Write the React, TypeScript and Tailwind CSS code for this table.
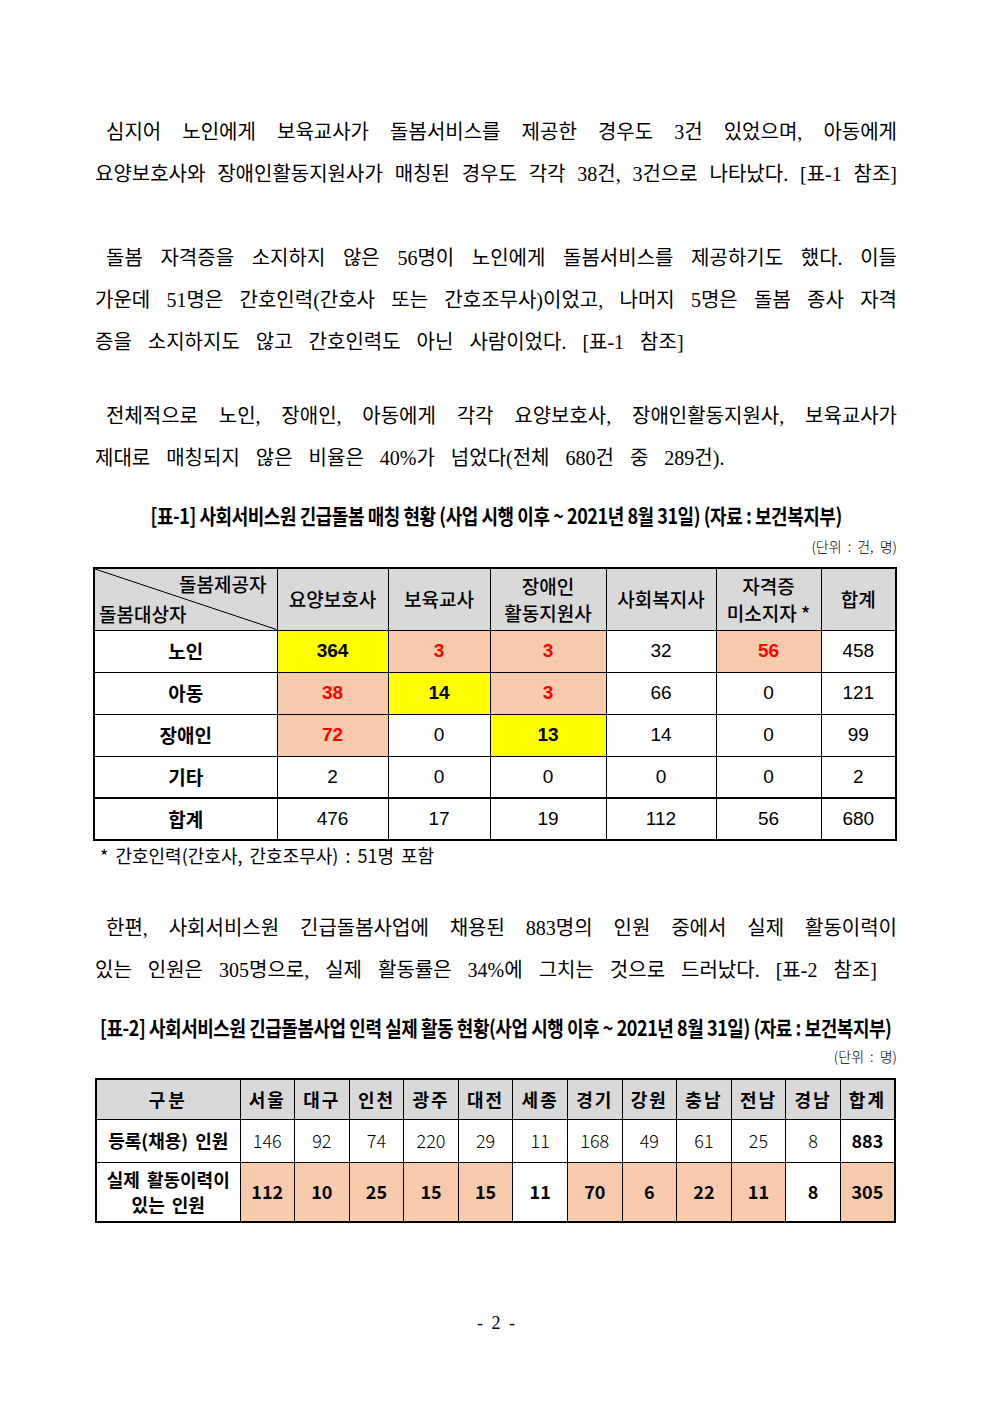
import React from "react";

const serif = "[font-family:'Liberation_Serif','Noto_Sans_CJK_KR',serif]";
const gothic = "[font-family:'Noto_Sans_CJK_KR',sans-serif]";
const narrow = "[font-family:'Liberation_Sans_Narrow','Liberation_Sans','Noto_Sans_CJK_KR',sans-serif]";

function Line({
  children,
  full = true,
  indent = false,
}: {
  children: React.ReactNode;
  full?: boolean;
  indent?: boolean;
}) {
  return (
    <div
      className={`h-[42px] leading-[42px] ${
        full ? "text-justify [text-align-last:justify]" : "text-left [word-spacing:11px]"
      } ${indent ? "pl-[11px]" : ""}`}
    >
      {children}
    </div>
  );
}

function Title({ children }: { children: React.ReactNode }) {
  return (
    <div className="flex h-[30px] items-center justify-center">
      <span
        className={`inline-block shrink-0 whitespace-nowrap text-[21px] font-bold tracking-[-0.5px] scale-x-[0.855] ${gothic}`}
      >
        {children}
      </span>
    </div>
  );
}

function Unit({ children }: { children: React.ReactNode }) {
  return (
    <div className="flex h-[20px] items-center justify-end">
      <span
        className={`inline-block origin-right whitespace-nowrap text-[14px] font-light [word-spacing:3px] ${gothic}`}
      >
        {children}
      </span>
    </div>
  );
}

type Kind = "y" | "p" | "";
const rows1: { label: string; cells: [string, Kind][]; total?: boolean }[] = [
  { label: "노인", cells: [["364", "y"], ["3", "p"], ["3", "p"], ["32", ""], ["56", "p"], ["458", ""]] },
  { label: "아동", cells: [["38", "p"], ["14", "y"], ["3", "p"], ["66", ""], ["0", ""], ["121", ""]] },
  { label: "장애인", cells: [["72", "p"], ["0", ""], ["13", "y"], ["14", ""], ["0", ""], ["99", ""]] },
  { label: "기타", cells: [["2", ""], ["0", ""], ["0", ""], ["0", ""], ["0", ""], ["2", ""]] },
  { label: "합계", cells: [["476", ""], ["17", ""], ["19", ""], ["112", ""], ["56", ""], ["680", ""]], total: true },
];

function Table1() {
  const head = "border border-black bg-[#d9d9d9] text-center align-middle font-medium";
  return (
    <table className={`w-[802px] table-fixed border-collapse border-2 border-black text-[19px] ${gothic}`}>
      <colgroup>
        <col className="w-[183px]" />
        <col className="w-[111px]" />
        <col className="w-[102px]" />
        <col className="w-[116px]" />
        <col className="w-[110px]" />
        <col className="w-[105px]" />
        <col className="w-[75px]" />
      </colgroup>
      <thead>
        <tr className="h-[62px]">
          <td className="relative border border-black bg-[#d9d9d9] p-0 font-medium">
            <svg
              className="absolute inset-0 h-full w-full"
              viewBox="0 0 100 100"
              preserveAspectRatio="none"
            >
              <line x1="0" y1="0" x2="100" y2="100" stroke="black" strokeWidth="1" vectorEffect="non-scaling-stroke" />
            </svg>
            <div className="relative flex h-[60px] flex-col justify-between px-[4px] pt-[1px] pb-[2px] leading-[27px]">
              <div className="pr-[6px] text-right">돌봄제공자</div>
              <div className="text-left">돌봄대상자</div>
            </div>
          </td>
          <td className={head}>요양보호사</td>
          <td className={head}>보육교사</td>
          <td className={`${head} leading-[27px]`}>
            장애인
            <br />
            활동지원사
          </td>
          <td className={head}>사회복지사</td>
          <td className={`${head} leading-[27px]`}>
            자격증
            <br />
            미소지자 *
          </td>
          <td className={head}>합계</td>
        </tr>
      </thead>
      <tbody>
        {rows1.map((r) => (
          <tr key={r.label} className="h-[42px]">
            <td
              className={`border border-black text-center font-bold ${r.total ? "border-t-2" : ""}`}
            >
              {r.label}
            </td>
            {r.cells.map(([v, k], i) => (
              <td
                key={i}
                className={`border border-black text-center text-[19px] ${narrow} ${
                  r.total ? "border-t-2" : ""
                } ${k === "y" ? "bg-[#ffff00] font-bold text-black" : ""} ${
                  k === "p" ? "bg-[#f8cbad] font-bold text-[#ff0000]" : ""
                }`}
              >
                {v}
              </td>
            ))}
          </tr>
        ))}
      </tbody>
    </table>
  );
}

const regions = ["서울", "대구", "인천", "광주", "대전", "세종", "경기", "강원", "충남", "전남", "경남", "합계"];
const registered = ["146", "92", "74", "220", "29", "11", "168", "49", "61", "25", "8", "883"];
const active = ["112", "10", "25", "15", "15", "11", "70", "6", "22", "11", "8", "305"];
const white2 = [5, 10];

function Table2() {
  return (
    <table className={`w-[801px] table-fixed border-collapse border-2 border-black text-[18px] ${gothic}`}>
      <colgroup>
        <col className="w-[144px]" />
        {regions.map((r) => (
          <col key={r} />
        ))}
      </colgroup>
      <tbody>
        <tr className="h-[40px] bg-[#d9d9d9]">
          <td className="border border-black text-center font-bold tracking-[3px]">구분</td>
          {regions.map((r) => (
            <td key={r} className="border border-black text-center font-bold tracking-[2px]">
              {r}
            </td>
          ))}
        </tr>
        <tr className="h-[43px]">
          <td className="border border-black text-center font-bold [word-spacing:3px]">등록(채용) 인원</td>
          {registered.map((v, i) => (
            <td
              key={i}
              className={`border border-black text-center ${i === 11 ? "font-bold" : "font-light"}`}
            >
              {v}
            </td>
          ))}
        </tr>
        <tr className="h-[60px]">
          <td className="border border-black text-center font-bold leading-[25px] [word-spacing:3px]">
            실제 활동이력이
            <br />
            있는 인원
          </td>
          {active.map((v, i) => (
            <td
              key={i}
              className={`border border-black text-center font-bold ${
                white2.includes(i) ? "bg-white" : "bg-[#f8cbad]"
              }`}
            >
              {v}
            </td>
          ))}
        </tr>
      </tbody>
    </table>
  );
}

export default function App() {
  return (
    <div className="min-h-[1403px] w-[992px] bg-white text-black">
      <div className={`mx-auto w-[802px] pt-[111px] text-[20px] ${serif}`}>
        <Line indent>심지어 노인에게 보육교사가 돌봄서비스를 제공한 경우도 3건 있었으며, 아동에게</Line>
        <Line>요양보호사와 장애인활동지원사가 매칭된 경우도 각각 38건, 3건으로 나타났다. [표-1 참조]</Line>

        <div className="mt-[42px]">
          <Line indent>돌봄 자격증을 소지하지 않은 56명이 노인에게 돌봄서비스를 제공하기도 했다. 이들</Line>
          <Line>가운데 51명은 간호인력(간호사 또는 간호조무사)이었고, 나머지 5명은 돌봄 종사 자격</Line>
          <Line full={false}>증을 소지하지도 않고 간호인력도 아닌 사람이었다. [표-1 참조]</Line>
        </div>

        <div className="mt-[32px]">
          <Line indent>전체적으로 노인, 장애인, 아동에게 각각 요양보호사, 장애인활동지원사, 보육교사가</Line>
          <Line full={false}>제대로 매칭되지 않은 비율은 40%가 넘었다(전체 680건 중 289건).</Line>
        </div>

        <div className="mt-[22px]">
          <Title>[표-1] 사회서비스원 긴급돌봄 매칭 현황 (사업 시행 이후 ~ 2021년 8월 31일) (자료 : 보건복지부)</Title>
        </div>
        <div className="mt-[5px]">
          <Unit>(단위 : 건, 명)</Unit>
        </div>
        <div className="mt-[11px] -ml-[2px]">
          <Table1 />
        </div>
        <div className={`mt-[2px] flex h-[24px] items-center pl-[5px] text-[18px] [word-spacing:3px] ${gothic}`}>
          * 간호인력(간호사, 간호조무사) : 51명 포함
        </div>

        <div className="mt-[40px]">
          <Line indent>한편, 사회서비스원 긴급돌봄사업에 채용된 883명의 인원 중에서 실제 활동이력이</Line>
          <Line full={false}>있는 인원은 305명으로, 실제 활동률은 34%에 그치는 것으로 드러났다. [표-2 참조]</Line>
        </div>

        <div className="mt-[22px]">
          <Title>[표-2] 사회서비스원 긴급돌봄사업 인력 실제 활동 현황(사업 시행 이후 ~ 2021년 8월 31일) (자료 : 보건복지부)</Title>
        </div>
        <div className="mt-[3px]">
          <Unit>(단위 : 명)</Unit>
        </div>
        <div className="mt-[12px]">
          <Table2 />
        </div>

        <div className="mt-[88px] flex h-[24px] items-center justify-center text-[18px] [word-spacing:4px]">- 2 -</div>
      </div>
    </div>
  );
}
